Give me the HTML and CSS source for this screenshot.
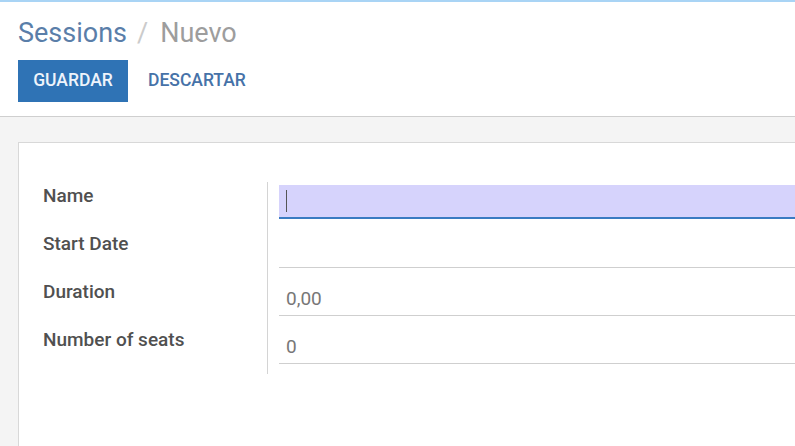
FILE: index.html
```html
<!DOCTYPE html>
<html>
<head>
<meta charset="utf-8">
<link rel="stylesheet" href="styles.css">
</head>
<body>
<div class="control-panel">
  <div class="breadcrumb"><span class="crumb-link">Sessions</span><span class="crumb-sep">/</span><span class="crumb-active">Nuevo</span></div>
  <div class="buttons">
    <button class="btn btn-primary">GUARDAR</button>
    <button class="btn btn-link">DESCARTAR</button>
  </div>
</div>
<div class="content">
  <div class="sheet">
    <div class="group">
      <div class="labels">
        <div class="label">Name</div>
        <div class="label">Start Date</div>
        <div class="label">Duration</div>
        <div class="label">Number of seats</div>
      </div>
      <div class="fields">
        <div class="field focused"><span class="caret"></span></div>
        <div class="field"></div>
        <div class="field">0,00</div>
        <div class="field">0</div>
      </div>
    </div>
  </div>
</div>
</body>
</html>
```
FILE: styles.css
```css
html, body {
  margin: 0;
  padding: 0;
  height: 100%;
}
body {
  font-family: Roboto, "Noto Sans", sans-serif;
  background: #f4f4f4;
  border-top: 2px solid #a9d4f5;
  box-sizing: border-box;
  overflow: hidden;
}
.control-panel {
  background: #fff;
  padding: 15px 18px 15px 18px;
  border-bottom: 1px solid #cfcfcf;
  height: 84px;
  box-sizing: content-box;
}
.breadcrumb {
  font-size: 27px;
  line-height: 32px;
  height: 32px;
  display: flex;
}
.crumb-link { color: #5a7ea9; }
.crumb-sep { color: #cbcbcb; margin: 0 12px 0 10px; }
.crumb-active { color: #9d9d9d; }
.buttons {
  display: flex;
  align-items: center;
  margin-top: 11px;
}
.btn {
  font-family: Roboto, "Noto Sans", sans-serif;
  font-size: 17.5px;
  font-weight: 500;
  border: none;
  height: 42px;
  padding: 0 0 2px 0;
  cursor: pointer;
}
.btn-primary {
  background: #2f73b5;
  color: #eef4fb;
  width: 110px;
}
.btn-link {
  background: none;
  color: #4672a8;
  padding: 0 20px 2px 20px;
}
.content {
  padding: 25px 0 0 18px;
}
.sheet {
  background: #fff;
  border: 1px solid #d8d8d8;
  border-right: none;
  height: 320px;
  padding: 38px 0 0 24px;
  box-sizing: border-box;
}
.group {
  display: flex;
  padding-top: 1px;
}
.labels {
  width: 224px;
  border-right: 1px solid #d4d4d4;
  padding-top: 2px;
  height: 190px;
}
.label {
  height: 48px;
  font-size: 19px;
  font-weight: 500;
  color: #505050;
  line-height: 24px;
}
.fields {
  flex: 1;
  margin-left: 11px;
  padding-top: 3px;
}
.field {
  height: 33px;
  margin-bottom: 14px;
  border-bottom: 1px solid #cfcfcf;
  box-sizing: content-box;
  padding-left: 7px;
  font-size: 19px;
  line-height: 22px;
  color: #777;
  display: flex;
  align-items: center;
}
.field.focused {
  background: #d6d3fc;
  border-bottom: 2px solid #3a7bc2;
  height: 32px;
  margin-bottom: 15px;
}
.caret {
  display: inline-block;
  width: 1px;
  height: 22px;
  background: #555;
}
```
